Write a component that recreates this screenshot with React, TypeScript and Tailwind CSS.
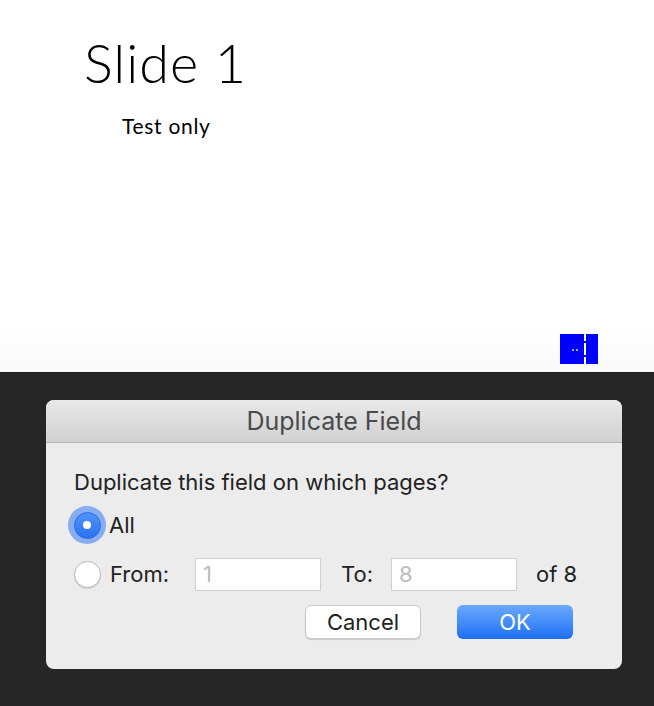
import React from "react";

const sys = { fontFamily: '"Inter", "Liberation Sans", Arial, sans-serif' };

export default function App() {
  return (
    <div className="w-[654px] h-[706px] flex flex-col overflow-hidden bg-white">
      {/* Slide area */}
      <div className="h-[372px] flex flex-col bg-gradient-to-b from-white from-[88%] to-[#f9f9f9]">
        <div
          className="pl-[84px] pt-[30px] text-[54px] leading-[66px] font-light text-black tracking-[1px]"
          style={{ fontFamily: '"Lato", "Open Sans", sans-serif' }}
        >
          Slide 1
        </div>
        <div
          className="pl-[122px] pt-[16px] text-[21px] leading-[28px] text-black tracking-[0.7px]"
          style={{ fontFamily: '"Lato", "Open Sans", sans-serif' }}
        >
          Test only
        </div>
        <div className="mt-[194px] flex justify-end pr-[56px]">
          <div className="relative w-[38px] h-[30px] bg-[#0000ff]">
            <div className="absolute left-[24px] top-0 w-[2px] h-[7px] bg-white" />
            <div className="absolute left-[24px] top-[9px] w-[2px] h-[12px] bg-white" />
            <div className="absolute left-[24px] top-[23px] w-[2px] h-[7px] bg-white" />
            <div className="absolute left-[12px] top-[15px] w-[2px] h-[2px] bg-[#9ab0ff]" />
            <div className="absolute left-[16px] top-[15px] w-[2px] h-[2px] bg-[#9ab0ff]" />
          </div>
        </div>
      </div>

      {/* Dark area */}
      <div className="flex-1 bg-[#262626] border-t border-[#1c1c1c] pt-[27px] pl-[46px]">
        <div className="w-[576px] h-[269px] rounded-[8px] overflow-hidden bg-[#ececec] flex flex-col" style={sys}>
          <div className="h-[43px] shrink-0 flex items-center justify-center bg-gradient-to-b from-[#e9e9e9] to-[#d1d1d1] border-b border-[#b4b4b4]">
            <span className="text-[25px] leading-[30px] text-[#4a4a4a]">Duplicate Field</span>
          </div>
          <div className="flex flex-col pl-[28px] pr-[49px] whitespace-nowrap">
            <div className="mt-[27px] h-[24px] flex items-center text-[22px] text-[#222]">
              Duplicate this field on which pages?
            </div>
            <div className="mt-[12px] h-[38px] flex items-center -ml-[6px]">
              <div className="shrink-0 w-[38px] h-[38px] rounded-full bg-[#86acf2] flex items-center justify-center">
                <div className="w-[27px] h-[27px] rounded-full bg-gradient-to-b from-[#4f93f8] to-[#2c72f0] border border-[#2a6ae0] flex items-center justify-center">
                  <div className="w-[8px] h-[8px] rounded-full bg-white" />
                </div>
              </div>
              <span className="ml-[3px] text-[22px] text-[#222]">All</span>
            </div>
            <div className="mt-[13px] h-[34px] flex items-center">
              <div className="shrink-0 w-[27px] h-[27px] rounded-full bg-white border border-[#b9b9b9] shadow-[0_1px_1px_rgba(0,0,0,0.12)]" />
              <span className="shrink-0 ml-[9px] text-[22px] text-[#222] w-[85px]">From:</span>
              <div className="shrink-0 w-[126px] h-[33px] bg-white border border-[#cfcfcf] flex items-center pl-[7px] text-[22px] text-[#bdbdbd]">1</div>
              <span className="shrink-0 ml-[20px] text-[22px] text-[#222] w-[50px]">To:</span>
              <div className="shrink-0 w-[126px] h-[33px] bg-white border border-[#cfcfcf] flex items-center pl-[7px] text-[22px] text-[#bdbdbd]">8</div>
              <span className="shrink-0 ml-[19px] text-[22px] text-[#222]">of 8</span>
            </div>
            <div className="mt-[14px] flex justify-end gap-[36px]">
              <div className="w-[116px] h-[34px] rounded-[6px] bg-white border border-[#c8c8c8] shadow-[0_1px_1px_rgba(0,0,0,0.15)] flex items-center justify-center text-[22px] text-[#222]">
                Cancel
              </div>
              <div className="w-[116px] h-[34px] rounded-[6px] bg-gradient-to-b from-[#6aa9fb] to-[#1a6ef5] flex items-center justify-center text-[22px] text-white">
                OK
              </div>
            </div>
          </div>
        </div>
      </div>
    </div>
  );
}
